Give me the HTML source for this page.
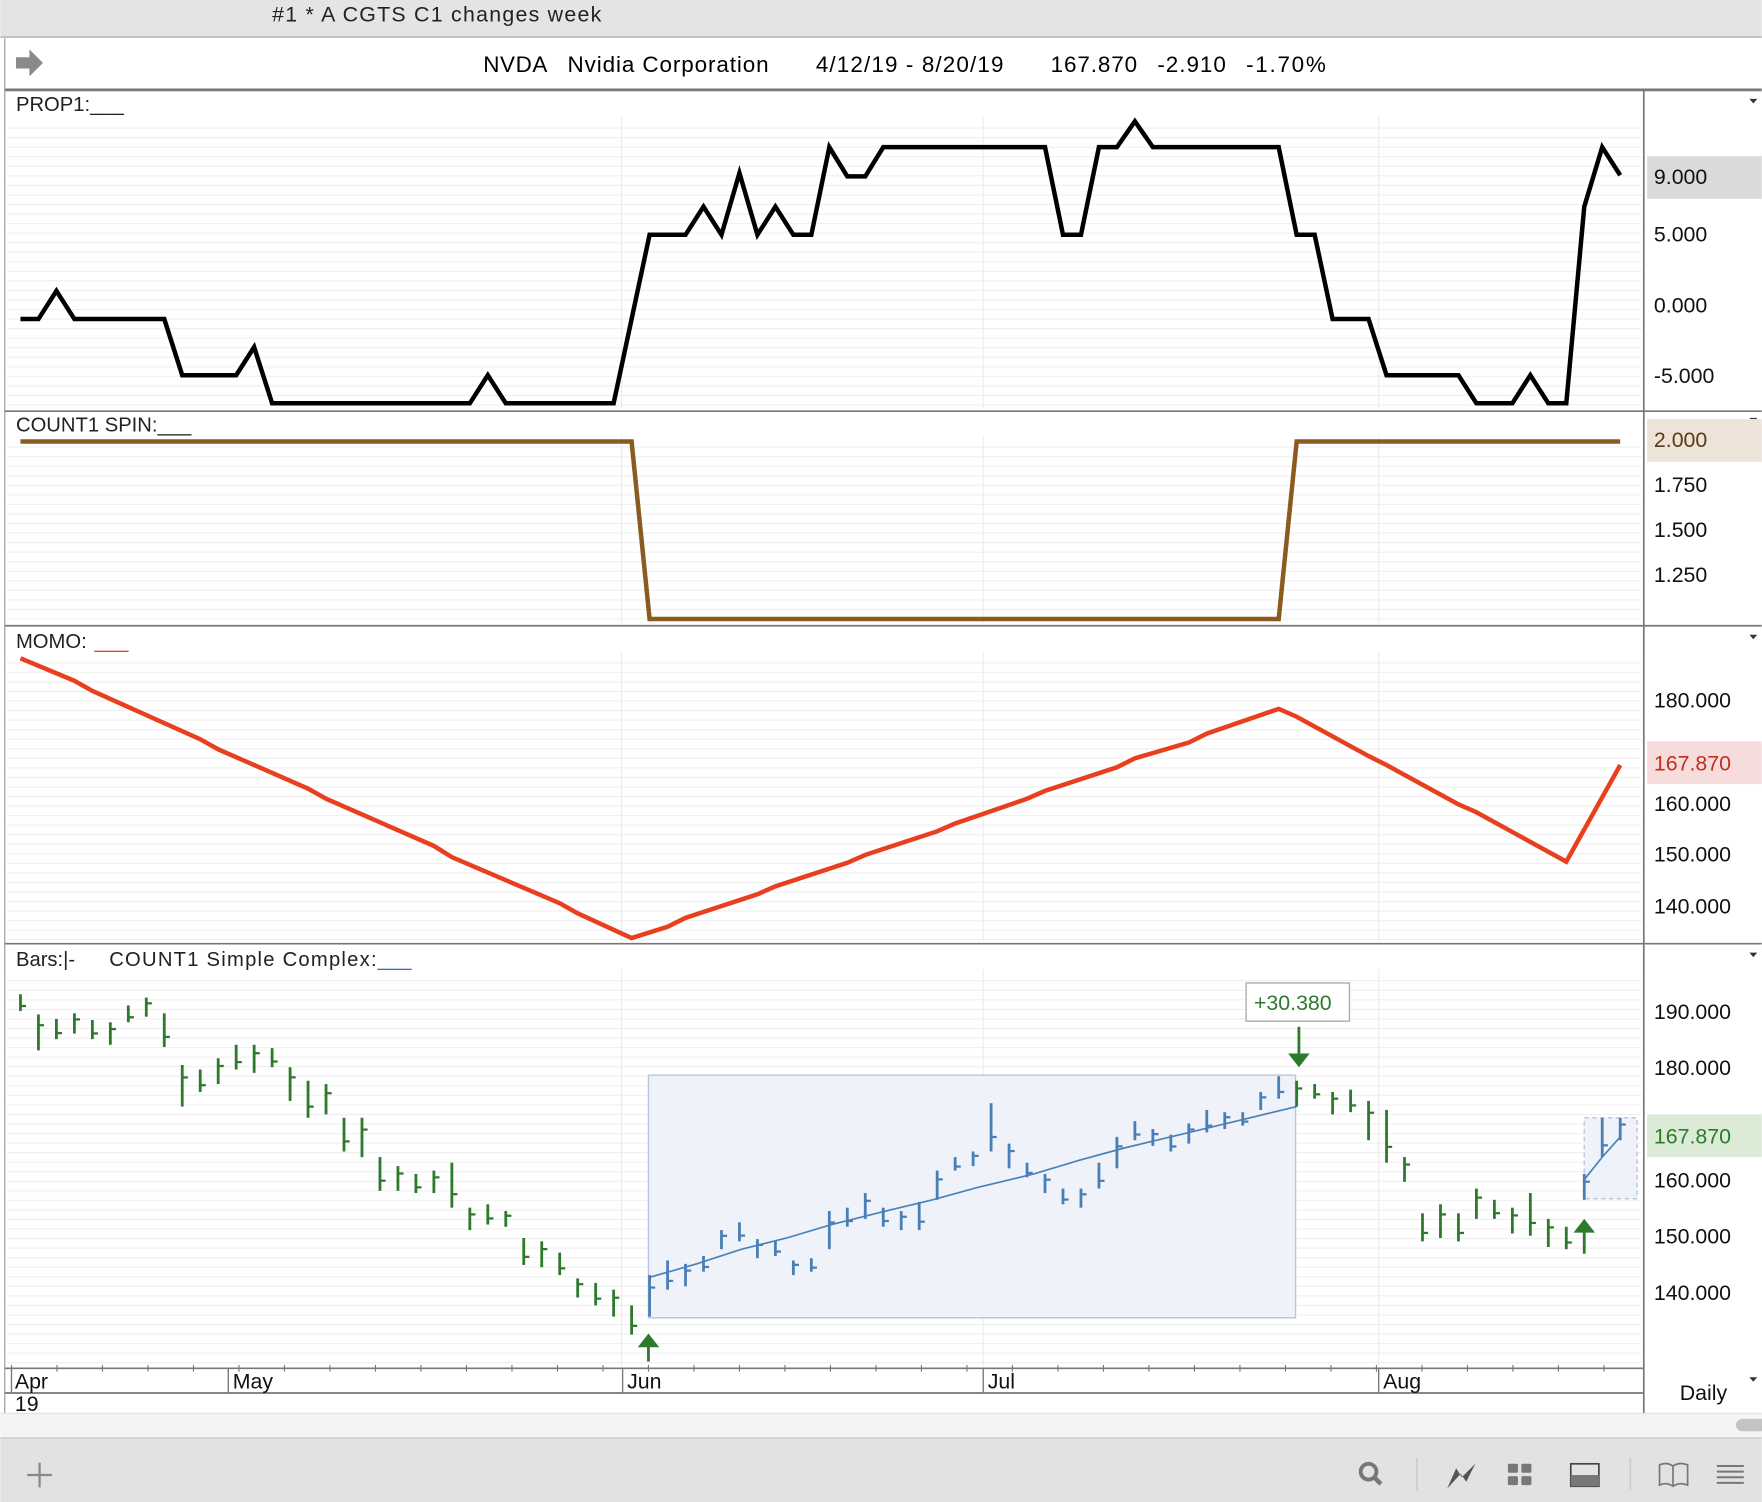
<!DOCTYPE html>
<html><head><meta charset="utf-8"><style>
html,body{margin:0;padding:0;background:#fff;overflow:hidden}
svg{display:block}
text{font-family:"Liberation Sans",sans-serif}
</style></head><body>
<svg id="s" width="1762" height="1502" viewBox="0 0 1568 1337" xmlns="http://www.w3.org/2000/svg">
<rect x="0" y="0" width="1568" height="33" fill="#e4e4e4"/>
<line x1="0" y1="33" x2="1568" y2="33" fill="none" stroke="#b8b8b8" stroke-width="1.5"/>
<text x="242" y="19" font-size="19" fill="#222" textLength="293" lengthAdjust="spacing">#1 * A CGTS  C1 changes week</text>
<rect x="0" y="34" width="1568" height="46" fill="#fff"/>
<path d="M14 51h12v-7l12 12-12 12v-7h-12z" fill="#8a8a8a"/>
<g font-size="20" fill="#000">
<text x="430" y="64" textLength="57">NVDA</text>
<text x="505" y="64" textLength="179">Nvidia Corporation</text>
<text x="726" y="64" textLength="167">4/12/19 - 8/20/19</text>
<text x="935" y="64" textLength="77">167.870</text>
<text x="1030" y="64" textLength="61">-2.910</text>
<text x="1109" y="64" textLength="71">-1.70%</text>
</g>
<line x1="4" y1="80" x2="1568" y2="80" stroke="#777" stroke-width="2.5"/>
<line x1="4" y1="34" x2="4" y2="1258" stroke="#999" stroke-width="1"/>
<g id="grid"></g>
<g stroke="#777" stroke-width="1.5">
<line x1="4" y1="366" x2="1568" y2="366"/>
<line x1="4" y1="557" x2="1568" y2="557"/>
<line x1="4" y1="840" x2="1568" y2="840"/>
<line x1="4" y1="1218" x2="1463" y2="1218"/>
<line x1="4" y1="1240" x2="1463" y2="1240"/>
<line x1="1463" y1="81" x2="1463" y2="1258"/>
</g>
<g fill="#222" font-size="18">
<text x="14" y="99">PROP1:___</text>
<text x="14" y="384">COUNT1 SPIN:___</text>
<text x="14" y="577">MOMO:</text><text x="84" y="577" fill="#e8401f">___</text>
<text x="14" y="860">Bars:|-</text>
<text x="97" y="860" textLength="238">COUNT1 Simple Complex:</text><text x="336" y="860" fill="#3b6fb0">___</text>
</g>
<g fill="#333"><path d="M1557 88h7l-3.5 4z"/><path d="M1557 372h7l-3.5 4z"/><path d="M1557 565h7l-3.5 4z"/><path d="M1557 848h7l-3.5 4z"/><path d="M1557 1226h7l-3.5 4z"/></g>
<rect x="1466" y="139" width="102" height="38" fill="#dadada"/>
<rect x="1466" y="373" width="102" height="38" fill="#ede3d9"/>
<rect x="1466" y="660" width="102" height="38" fill="#f6dcdc"/>
<rect x="1466" y="992" width="102" height="38" fill="#dcebd6"/>
<g font-size="19" fill="#111">
<text x="1472" y="164">9.000</text><text x="1472" y="215">5.000</text><text x="1472" y="278">0.000</text><text x="1472" y="341">-5.000</text>
<text x="1472" y="398" fill="#5a3a10">2.000</text><text x="1472" y="438">1.750</text><text x="1472" y="478">1.500</text><text x="1472" y="518">1.250</text>
<text x="1472" y="630">180.000</text><text x="1472" y="686" fill="#c0301a">167.870</text><text x="1472" y="722">160.000</text><text x="1472" y="767">150.000</text><text x="1472" y="813">140.000</text>
<text x="1472" y="907">190.000</text><text x="1472" y="957">180.000</text><text x="1472" y="1018" fill="#2d7a2d">167.870</text><text x="1472" y="1057">160.000</text><text x="1472" y="1107">150.000</text><text x="1472" y="1157">140.000</text>
</g>
<polyline fill="none" stroke="#000" stroke-width="4" points="18,284 34,284 50,259 66,284 146,284 162,334 210,334 226,309 242,359 418,359 434,334 450,359 546,359 578,209 610,209 626,184 642,209 658,154 674,209 690,184 706,209 722,209 738,131 754,157 770,157 786,131 930,131 946,209 962,209 978,131 994,131 1010,108 1026,131 1138,131 1154,209 1170,209 1186,284 1218,284 1234,334 1298,334 1314,359 1346,359 1362,334 1378,359 1394,359 1410,184 1426,131 1442,156"/>
<polyline fill="none" stroke="#8b5a1e" stroke-width="4" points="18,393 562,393 578,551 1138,551 1154,393 1442,393"/>
<polyline fill="none" stroke="#e8401f" stroke-width="4" points="18,586 66,606 82,615 178,658 194,667 274,702 290,711 386,753 402,763 498,804 514,813 562,835 594,825 610,817 674,796 690,789 754,768 770,761 834,740 850,733 914,711 930,704 994,683 1010,675 1058,661 1074,653 1138,631 1154,638 1218,673 1234,681 1298,716 1314,723 1394,767 1442,681"/>
<rect x="577" y="957" width="576" height="216" fill="#f0f2f9" stroke="#b8c4dc" stroke-width="1.2"/>
<rect x="1410" y="995" width="47" height="72" fill="#f0f2f9" stroke="#b8c4dc" stroke-width="1.2" stroke-dasharray="4 3"/>
<polyline fill="none" stroke="#4a82b8" stroke-width="1.5" points="578,1137 620,1125 660,1112 700,1102 740,1090 780,1080 830,1068 870,1057 920,1045 960,1033 1000,1022 1050,1010 1100,998 1154,985"/>
<polyline fill="none" stroke="#4a82b8" stroke-width="1.5" points="1410,1050 1426,1030 1442,1012"/>
<g id="bars"></g>
<g fill="#2d7a2d" stroke="#2d7a2d" stroke-width="2.5">
<line x1="577" y1="1212" x2="577" y2="1194"/><path d="M570 1198l7-9 7 9z"/>
<line x1="1156" y1="914" x2="1156" y2="942"/><path d="M1149 939l7 9 7-9z"/>
<line x1="1410" y1="1116" x2="1410" y2="1092"/><path d="M1403 1096l7-9 7 9z"/>
</g>
<rect x="1109" y="875" width="92" height="34" fill="#fff" stroke="#aaa" stroke-width="1.2"/>
<text x="1116" y="899" font-size="19" fill="#2d7a2d">+30.380</text>
<g stroke="#777" stroke-width="1.2">
<line x1="10" y1="1218" x2="10" y2="1240"/><line x1="203" y1="1218" x2="203" y2="1240"/><line x1="554" y1="1218" x2="554" y2="1240"/><line x1="875" y1="1218" x2="875" y2="1240"/><line x1="1227" y1="1218" x2="1227" y2="1240"/>
</g>
<g font-size="19" fill="#111">
<text x="13" y="1236">Apr</text><text x="13" y="1256">19</text><text x="207" y="1236">May</text><text x="558" y="1236">Jun</text><text x="879" y="1236">Jul</text><text x="1231" y="1236">Aug</text>
<text x="1495" y="1246">Daily</text>
</g>
<rect x="0" y="1258" width="1568" height="22" fill="#f4f4f4"/>
<line x1="0" y1="1258" x2="1568" y2="1258" stroke="#ddd"/>
<rect x="1545" y="1263" width="30" height="11" rx="5.5" fill="#c4c4c4"/>
<rect x="0" y="1280" width="1568" height="57" fill="#e2e2e2"/>
<line x1="0" y1="1280" x2="1568" y2="1280" stroke="#cfcfcf" stroke-width="1.5"/>
<g stroke="#888" stroke-width="2"><line x1="35" y1="1302" x2="35" y2="1324"/><line x1="24" y1="1313" x2="46" y2="1313"/></g>
<circle cx="1218" cy="1310" r="7" fill="none" stroke="#777" stroke-width="3.5"/><line x1="1223" y1="1315" x2="1229" y2="1321" stroke="#777" stroke-width="4"/>
<line x1="1261" y1="1298" x2="1261" y2="1327" stroke="#ccc" stroke-width="1.5"/>
<path d="M1288 1325l8-18 5 8 12-12-8 16-5-7z" fill="#555"/>
<g fill="#777"><rect x="1342" y="1303" width="9" height="8" rx="1.5"/><rect x="1354" y="1303" width="9" height="8" rx="1.5"/><rect x="1342" y="1314" width="9" height="8" rx="1.5"/><rect x="1354" y="1314" width="9" height="8" rx="1.5"/></g>
<rect x="1398" y="1303" width="25" height="20" fill="none" stroke="#444" stroke-width="1.5"/><rect x="1398" y="1313" width="25" height="10" fill="#777"/>
<line x1="1451" y1="1298" x2="1451" y2="1327" stroke="#ccc" stroke-width="1.5"/>
<path d="M1477 1322v-18q6-3 12 1q6-4 13-1v18q-7-3-13 1q-6-4-12-1zM1489 1304v19" fill="none" stroke="#777" stroke-width="1.5"/>
<g stroke="#777" stroke-width="1.8"><line x1="1528" y1="1305" x2="1552" y2="1305"/><line x1="1528" y1="1310" x2="1552" y2="1310"/><line x1="1528" y1="1315" x2="1552" y2="1315"/><line x1="1528" y1="1320" x2="1552" y2="1320"/></g>
</svg>
<script>
var NS="http://www.w3.org/2000/svg";
function el(p,t,a){var e=document.createElementNS(NS,t);for(var k in a)e.setAttribute(k,a[k]);p.appendChild(e);return e;}
var g=document.getElementById('grid');
[[84,364],[368,555],[560,838],[843,1216]].forEach(function(r){
 for(var y=r[0]+30;y<r[1];y+=8.5) el(g,'line',{x1:6,x2:1461,y1:y,y2:y,stroke:'#efefef','stroke-width':1});
 [553,875,1227].forEach(function(x){el(g,'line',{x1:x,x2:x,y1:r[0]+20,y2:r[1],stroke:'#ececec','stroke-width':1});});
});
for(var x=10;x<1450;x+=40.5) el(g,'line',{x1:x,x2:x,y1:1215,y2:1221,stroke:'#777','stroke-width':1});
var B=[[18,885,900],[34,903,935],[50,907,925],[66,902,920],[82,908,925],[98,910,930],[114,895,910],[130,888,905],[146,902,932],[162,948,985],[178,952,972],[194,942,965],[210,930,952],[226,930,955],[242,933,950],[258,950,980],[274,962,995],[290,965,992],[306,995,1025],[322,995,1030],[338,1030,1060],[354,1038,1060],[370,1045,1062],[386,1042,1062],[402,1035,1075],[418,1075,1095],[434,1072,1090],[450,1078,1092],[466,1102,1126],[482,1105,1128],[498,1115,1135],[514,1138,1155],[530,1142,1162],[546,1148,1172],[562,1162,1188],[578,1135,1172],[594,1122,1148],[610,1125,1145],[626,1118,1132],[642,1095,1112],[658,1088,1105],[674,1103,1120],[690,1105,1118],[706,1122,1135],[722,1120,1132],[738,1078,1112],[754,1075,1092],[770,1062,1085],[786,1075,1092],[802,1078,1095],[818,1070,1095],[834,1042,1068],[850,1030,1042],[866,1025,1038],[882,982,1025],[898,1018,1040],[914,1035,1048],[930,1045,1062],[946,1058,1072],[962,1058,1075],[978,1035,1058],[994,1012,1040],[1010,998,1015],[1026,1005,1020],[1042,1010,1025],[1058,1000,1018],[1074,988,1008],[1090,990,1005],[1106,990,1002],[1122,972,988],[1138,958,978],[1154,962,985],[1170,965,978],[1186,972,992],[1202,970,990],[1218,980,1015],[1234,988,1035],[1250,1030,1052],[1266,1080,1105],[1282,1072,1102],[1298,1080,1105],[1314,1058,1085],[1330,1068,1085],[1346,1075,1098],[1362,1062,1100],[1378,1085,1110],[1394,1092,1112],[1410,1045,1068],[1426,995,1030],[1442,995,1015]];
var bg=document.getElementById('bars');
B.forEach(function(b,i){
 var blue=(b[0]>=578&&b[0]<=1138)||b[0]>=1410;
 var c=blue?'#4a7fb5':'#2d7a2d';
 el(bg,'line',{x1:b[0],x2:b[0],y1:b[1],y2:b[2],stroke:c,'stroke-width':2.5});
 var cy=(i%2)?b[1]+(b[2]-b[1])*0.3:b[1]+(b[2]-b[1])*0.7;
 el(bg,'line',{x1:b[0],x2:b[0]+5,y1:cy,y2:cy,stroke:c,'stroke-width':2});
});
</script>
</body></html>
